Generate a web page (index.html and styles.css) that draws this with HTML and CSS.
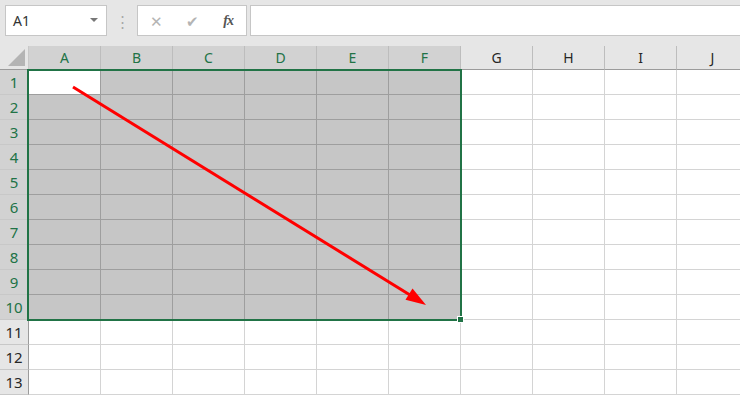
FILE: index.html
```html
<!DOCTYPE html>
<html lang="en">
<head>
  <meta charset="UTF-8">
  <title>Sheet</title>
  <link rel="stylesheet" href="styles.css">
</head>
<body>
  <!-- formula bar -->
  <div class="toolbar">
    <div class="namebox">
      <span>A1</span>
      <span class="caret"></span>
    </div>
    <div class="dots">&#8942;</div>
    <div class="fbuttons">
      <span class="fb cancel">&#10005;</span>
      <span class="fb enter">&#10004;</span>
      <span class="fb fx">fx</span>
    </div>
    <div class="formula"></div>
  </div>

  <div class="sheet">
    <div id="grid"></div>
    <div class="selection"><span class="handle"></span></div>
    <svg class="arrow" width="740" height="354" viewBox="0 46 740 354">
      <line x1="73" y1="87" x2="410" y2="295" stroke="#ff0000" stroke-width="3"/>
      <polygon points="426,305 405.5,299.8 412.5,288.6" fill="#ff0000"/>
    </svg>
  </div>

  <script>
    const cols = ["A", "B", "C", "D", "E", "F", "G", "H", "I", "J"];
    const grid = document.getElementById("grid");
    let html = '<div class="row head"><div class="corner"><span class="tri"></span></div>';
    cols.forEach(function (c, i) {
      html += '<div class="colhead' + (i < 6 ? ' sel' : '') + '">' + c + '</div>';
    });
    html += '</div>';
    for (let r = 1; r <= 13; r++) {
      html += '<div class="row"><div class="rowhead' + (r <= 10 ? ' sel' : '') + '">' + r + '</div>';
      cols.forEach(function (c, i) {
        let cls = "cell";
        if (r <= 10 && i < 6) cls += (r === 1 && i === 0) ? " active" : " sel";
        html += '<div class="' + cls + '"></div>';
      });
      html += '</div>';
    }
    grid.innerHTML = html;
  </script>
</body>
</html>
```

FILE: styles.css
```css
body {
  margin: 0;
  width: 740px;
  height: 400px;
  overflow: hidden;
  background: #fff;
  font-family: "Noto Sans", "Liberation Sans", sans-serif;
}
.toolbar {
  display: flex;
  align-items: center;
  height: 46px;
  padding: 0 0 5px 5px;
  box-sizing: border-box;
  background: #e6e6e6;
}
.namebox {
  display: flex;
  align-items: center;
  justify-content: space-between;
  width: 102px;
  height: 31px;
  box-sizing: border-box;
  padding: 0 8px 0 7px;
  background: #fff;
  border: 1px solid #c6c6c6;
  font-size: 14px;
  color: #333;
}
.caret {
  width: 0;
  height: 0;
  border-left: 4px solid transparent;
  border-right: 4px solid transparent;
  border-top: 4px solid #777;
  margin-bottom: 2px;
}
.dots {
  width: 30px;
  text-align: center;
  color: #a8a8a8;
  font-size: 15px;
}
.fbuttons {
  display: flex;
  align-items: center;
  width: 110px;
  height: 31px;
  box-sizing: border-box;
  background: #fff;
  border: 1px solid #c6c6c6;
}
.fb {
  width: 36px;
  text-align: center;
  color: #b4b4b4;
  font-size: 15px;
}
.fb.cancel {
  padding-left: 1px;
}
.fb.fx {
  color: #555;
  font-family: "Liberation Serif", serif;
  font-style: italic;
  font-weight: bold;
  font-size: 14px;
  letter-spacing: -1px;
}
.formula {
  flex: 1;
  height: 31px;
  margin-left: 3px;
  box-sizing: border-box;
  background: #fff;
  border: 1px solid #c6c6c6;
  border-right: none;
}
.sheet {
  position: relative;
}
.row {
  display: flex;
  height: 25px;
}
.row.head {
  height: 24px;
}
.corner {
  position: relative;
  flex: 0 0 29px;
  box-sizing: border-box;
  background: #e6e6e6;
  border-right: 1px solid #c8c8c8;
  border-bottom: 1px solid #9b9b9b;
}
.tri {
  position: absolute;
  right: 3px;
  bottom: 3px;
  width: 0;
  height: 0;
  border-left: 17px solid transparent;
  border-bottom: 17px solid #b4b4b4;
}
.colhead {
  flex: 0 0 72px;
  box-sizing: border-box;
  background: #e6e6e6;
  border-right: 1px solid #bdbdbd;
  border-bottom: 1px solid #9b9b9b;
  text-align: center;
  line-height: 23px;
  font-size: 14px;
  color: #262626;
}
.colhead.sel {
  background: #d2d2d2;
  color: #217346;
}
.rowhead {
  flex: 0 0 29px;
  box-sizing: border-box;
  background: #e6e6e6;
  border-right: 1px solid #9b9b9b;
  border-bottom: 1px solid #c8c8c8;
  text-align: center;
  line-height: 24px;
  font-size: 15px;
  color: #262626;
}
.rowhead.sel {
  background: #d2d2d2;
  color: #217346;
}
.cell {
  flex: 0 0 72px;
  box-sizing: border-box;
  border-right: 1px solid #d4d4d4;
  border-bottom: 1px solid #d4d4d4;
}
.cell.sel {
  background: #c6c6c6;
  border-color: #9e9e9e;
}
.cell.active {
  background: #fff;
  border-right-color: #9e9e9e;
  border-bottom-color: #9e9e9e;
}
.selection {
  position: absolute;
  left: 27px;
  top: 23px;
  width: 435px;
  height: 252px;
  box-sizing: border-box;
  border: 2px solid #217346;
}
.handle {
  position: absolute;
  right: -4px;
  bottom: -4px;
  width: 5px;
  height: 5px;
  background: #217346;
  border: 1px solid #fff;
}
.arrow {
  position: absolute;
  left: 0;
  top: 0;
}
```
